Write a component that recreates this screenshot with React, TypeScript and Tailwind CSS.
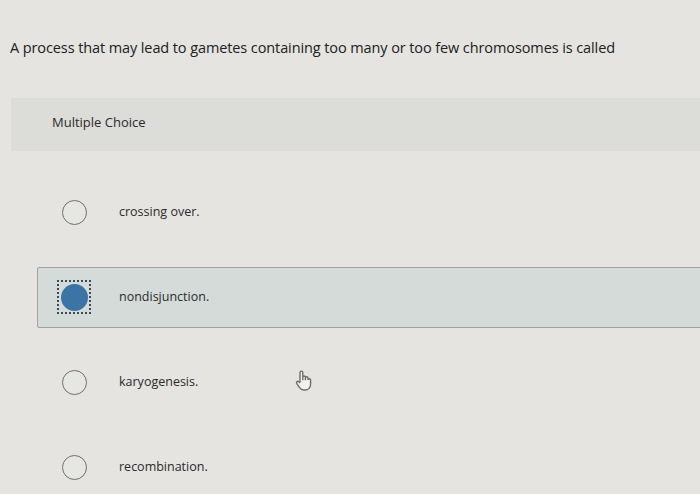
const options = [
  { id: "a", label: "crossing over." },
  { id: "b", label: "nondisjunction." },
  { id: "c", label: "karyogenesis." },
  { id: "d", label: "recombination." },
];

function Radio({ checked }: { checked: boolean }) {
  if (checked) {
    return (
      <div className="w-[34px] h-[34px] border-2 border-dotted border-[#3b4a58] flex items-center justify-center shrink-0">
        <div className="w-[27px] h-[27px] rounded-full bg-[#3c74a6]" />
      </div>
    );
  }
  return (
    <div className="w-[34px] h-[34px] flex items-center justify-center shrink-0">
      <div className="w-[25px] h-[25px] rounded-full border-[1.5px] border-[#6f706e] bg-[#e6e6e2]" />
    </div>
  );
}

export default function App() {
  const selected = "b";

  return (
    <div
      className="w-[700px] h-[494px] overflow-hidden bg-[#e5e4e0] text-[#2b2c2c]"
      style={{ fontFamily: "'Open Sans', Lato, sans-serif" }}
    >
      <div className="pt-[37px] pl-[10px] text-[14.5px] tracking-[-0.1px] text-[#202121]">
        A process that may lead to gametes containing too many or too few chromosomes is called
      </div>

      <div className="mt-[39px] ml-[11px] h-[53px] bg-[#dcdcd8] flex items-center pl-[41px] pb-[4px]">
        <span className="text-[13px] text-[#2a2b2b]">Multiple Choice</span>
      </div>

      <div className="mt-[31px] flex flex-col">
        {options.map((o) => {
          const isSel = o.id === selected;
          return (
            <div
              key={o.id}
              className={
                isSel
                  ? "ml-[37px] mr-[-4px] h-[61px] mb-[24px] bg-[#d5dbd9] border border-[#9da3a2] rounded-[2px] flex items-center pl-[19px]"
                  : "ml-[37px] h-[61px] mb-[24px] flex items-center pl-[20px]"
              }
            >
              <Radio checked={isSel} />
              <span className="ml-[28px] text-[12.5px] text-[#2a2b2b]">{o.label}</span>
              {o.id === "c" && (
                <svg
                  className="ml-[96px] mb-[2px]"
                  width="20"
                  height="24"
                  viewBox="0 0 20 24"
                  fill="none"
                  stroke="#6d6e6c"
                  strokeWidth="1.4"
                  strokeLinejoin="round"
                >
                  <path d="M6 13V3.5a1.4 1.4 0 0 1 2.8 0V11 M8.8 10V8.3a1.3 1.3 0 0 1 2.6 0V11 M11.4 10V9a1.3 1.3 0 0 1 2.6 0v2 M14 11a1.3 1.3 0 0 1 2.6 0v4c0 3.5-2.3 6-5.6 6H9.8c-2 0-3.3-1-4.4-2.6L2.6 14.3a1.4 1.4 0 0 1 2.2-1.6L6 14" fill="#f1f1ee" />
                </svg>
              )}
            </div>
          );
        })}
      </div>
    </div>
  );
}
